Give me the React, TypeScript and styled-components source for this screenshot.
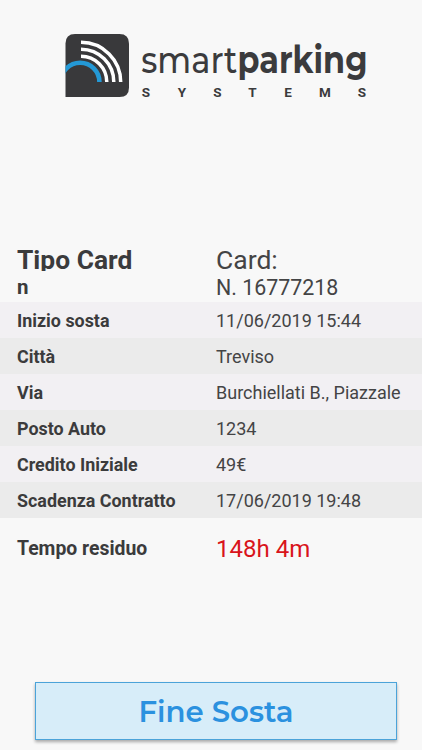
import React from 'react';
import styled, { createGlobalStyle } from 'styled-components';

const GlobalStyle = createGlobalStyle`
  html, body { margin: 0; padding: 0; background: #f8f8f8; }
  * { box-sizing: border-box; }
`;

const Screen = styled.main`
  display: flex;
  flex-direction: column;
  width: 422px;
  height: 750px;
  overflow: hidden;
  background: #f8f8f8;
  color: #3b3b3c;
  font-family: Roboto, 'Liberation Sans', sans-serif;
`;

const Header = styled.header`
  height: 245px;
  padding: 30px 0 0 60px;
`;

const Logo = styled.svg`
  display: block;
`;

const Line = styled.div<{ $height: number; $background?: string }>`
  display: grid;
  grid-template-columns: 199px 1fr;
  align-items: center;
  flex: none;
  height: ${(p) => p.$height}px;
  padding-left: 17px;
  background: ${(p) => p.$background ?? 'transparent'};
  white-space: nowrap;
`;

const DetailLine = styled(Line)`
  padding-top: 1px;
`;

const Label = styled.div<{ $size?: number; $lift?: number }>`
  padding-bottom: ${(p) => p.$lift ?? 0}px;
  font-size: ${(p) => p.$size ?? 17.9}px;
  font-weight: 700;
  line-height: 20px;
`;

const ClippedLabel = styled(Label)`
  align-self: start;
  height: 26px;
  line-height: 30px;
  overflow: hidden;
`;

const Value = styled.div<{ $size?: number; $lift?: number; $color?: string }>`
  padding-bottom: ${(p) => p.$lift ?? 0}px;
  font-size: ${(p) => p.$size ?? 18}px;
  line-height: 22px;
  color: ${(p) => p.$color ?? '#444445'};
`;

const Footer = styled.footer`
  margin-top: auto;
  padding: 0 25px 10px 35px;
`;

const EndButton = styled.button`
  display: block;
  width: 361.5px;
  height: 58px;
  padding: 0;
  border: 1px solid #4ba3d9;
  border-radius: 0;
  background: #d7edf9;
  box-shadow: 0 2px 3px rgba(0, 0, 0, 0.32);
`;

const ButtonText = styled.svg`
  display: block;
`;

const rows = [
  ['Inizio sosta', '11/06/2019 15:44'],
  ['Città', 'Treviso'],
  ['Via', 'Burchiellati B., Piazzale'],
  ['Posto Auto', '1234'],
  ['Credito Iniziale', '49€'],
  ['Scadenza Contratto', '17/06/2019 19:48'],
];

const tagline: [string, number][] = [
  ['S', 146], ['Y', 182], ['S', 217.5], ['T', 252.5], ['E', 288], ['M', 325], ['S', 362],
];

function BrandLogo() {
  return (
    <Logo width="320" height="75" viewBox="60 30 320 75" role="img" aria-label="smartparking systems">
      <clipPath id="mark"><path d="M65.5 97V43.5Q65.5 34 75 34H119.5Q129 34 129 43.5V87.5Q129 97 119.5 97Z" /></clipPath>
      <g clipPath="url(#mark)" fill="none">
        <rect x="65" y="33" width="65" height="65" fill="#39393b" />
        <g stroke="#fff" strokeWidth="3.5">
          <path d="M81 42.3A39.7 39.7 0 0 1 120.7 82" />
          <path d="M81 49.2A32.8 32.8 0 0 1 113.8 82" />
          <path d="M81 56.2A25.8 25.8 0 0 1 106.8 82" />
        </g>
        <path d="M60.8 82A19.3 19.3 0 0 1 99.4 82" stroke="#2499d6" strokeWidth="4.6" />
      </g>
      <g fill="#3b3b3d" fontFamily="Montserrat, Inter, sans-serif">
        <text x="141.3" y="73" fontSize="38" fontWeight="500" textLength="96" lengthAdjust="spacingAndGlyphs">smart</text>
        <text x="237.5" y="73" fontSize="38" fontWeight="700" textLength="130" lengthAdjust="spacingAndGlyphs">parking</text>
        {tagline.map(([letter, x]) => (
          <text key={x} x={x} y="97" fontSize="13.5" fontWeight="700" textAnchor="middle" fontFamily="Roboto, sans-serif">{letter}</text>
        ))}
      </g>
    </Logo>
  );
}

export default function App() {
  return (
    <Screen>
      <GlobalStyle />
      <Header><BrandLogo /></Header>
      <Line $height={30}>
        <ClippedLabel $size={26.4}>Tipo Card</ClippedLabel>
        <Value $size={26.5}>Card:</Value>
      </Line>
      <Line $height={27}>
        <Label $size={20.5} $lift={3}>n</Label>
        <Value $size={21.4} $lift={1}>N. 16777218</Value>
      </Line>
      {rows.map(([label, value], i) => (
        <DetailLine key={label} $height={36} $background={i % 2 ? '#ebebeb' : '#f2f0f3'}>
          <Label>{label}</Label>
          <Value>{value}</Value>
        </DetailLine>
      ))}
      <Line $height={61}>
        <Label $size={19.4}>Tempo residuo</Label>
        <Value $size={24} $color="#d9141b">148h 4m</Value>
      </Line>
      <Footer>
        <EndButton>
          <ButtonText width="359" height="56">
            <text x="102.5" y="39" fill="#2b91df" fontSize="29" fontWeight="600" fontFamily="Montserrat, Inter, sans-serif" textLength="155" lengthAdjust="spacingAndGlyphs">Fine Sosta</text>
          </ButtonText>
        </EndButton>
      </Footer>
    </Screen>
  );
}
